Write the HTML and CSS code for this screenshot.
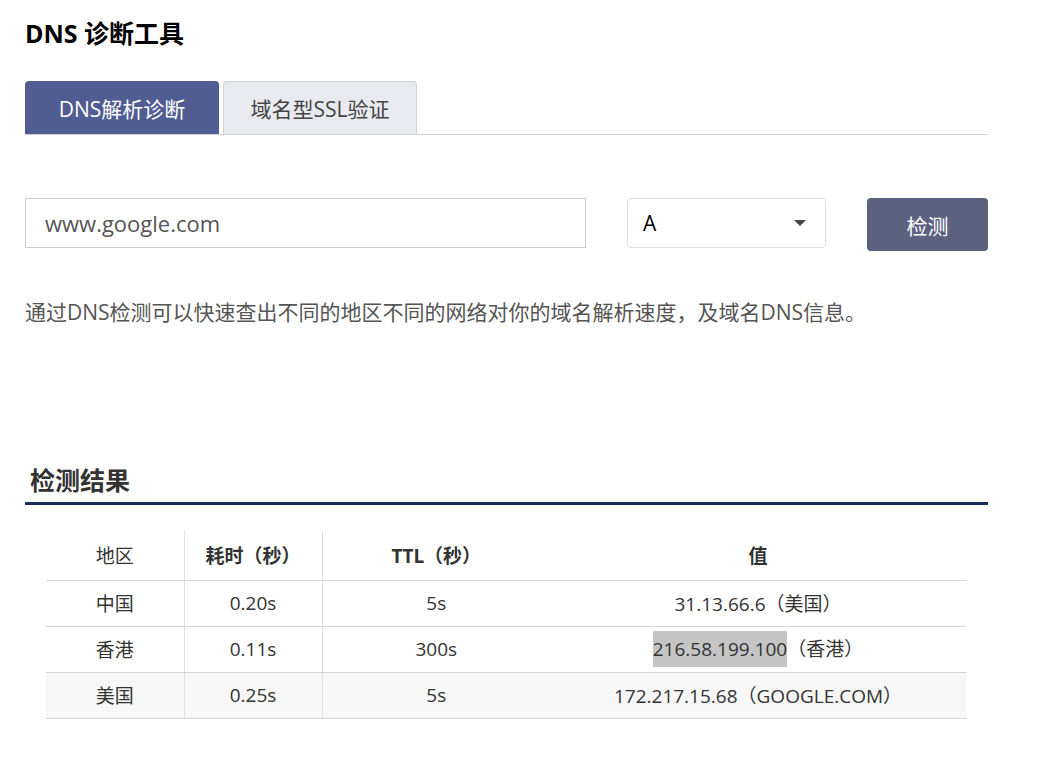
FILE: index.html
```html
<!DOCTYPE html>
<html lang="zh-CN">
<head>
<meta charset="utf-8">
<title>DNS 诊断工具</title>
<link rel="stylesheet" href="styles.css">
</head>
<body>
<div class="page">
  <h1 class="title">DNS 诊断工具</h1>
  <div class="tabs">
    <div class="tab tab-active">DNS解析诊断</div>
    <div class="tab">域名型SSL验证</div>
  </div>
  <div class="form-row">
    <div class="input">www.google.com</div>
    <div class="select">
      <span>A</span>
      <svg class="caret" width="12" height="6" viewBox="0 0 12 6"><path d="M0 0H12L6 6Z" fill="#444"/></svg>
    </div>
    <div class="btn">检测</div>
  </div>
  <p class="desc">通过DNS检测可以快速查出不同的地区不同的网络对你的域名解析速度，及域名DNS信息。</p>
  <h2 class="section-title">检测结果</h2>
  <table class="result">
    <colgroup>
      <col class="c1"><col class="c2"><col class="c3"><col class="c4">
    </colgroup>
    <thead>
      <tr>
        <th class="normal sep">地区</th>
        <th class="sep">耗时（秒）</th>
        <th>TTL（秒）</th>
        <th>值</th>
      </tr>
    </thead>
    <tbody>
      <tr>
        <td class="sep">中国</td>
        <td class="sep">0.20s</td>
        <td>5s</td>
        <td>31.13.66.6（美国）</td>
      </tr>
      <tr>
        <td class="sep">香港</td>
        <td class="sep">0.11s</td>
        <td>300s</td>
        <td><span class="hl">216.58.199.100</span>（香港）</td>
      </tr>
      <tr class="shaded">
        <td class="sep">美国</td>
        <td class="sep">0.25s</td>
        <td>5s</td>
        <td>172.217.15.68（GOOGLE.COM）</td>
      </tr>
    </tbody>
  </table>
</div>
</body>
</html>
```

FILE: styles.css
```css
* { box-sizing: border-box; }
html, body { margin: 0; padding: 0; background: #fff; }
body {
  font-family: "Open Sans", "Noto Sans CJK SC", sans-serif;
  color: #333;
}
.page {
  margin-left: 25px;
  width: 963px;
}
.title {
  margin: 16px 0 0;
  font-size: 25px;
  line-height: 34px;
  font-weight: 700;
  color: #000;
}
.tabs {
  margin-top: 31px;
  display: flex;
  gap: 4px;
  border-bottom: 1px solid #cfd1dc;
}
.tab {
  width: 194px;
  height: 53px;
  display: flex;
  align-items: center;
  justify-content: center;
  font-size: 21px;
  color: #444;
  background: #e9eaf0;
  border: 1px solid #cfd1dc;
  border-bottom: none;
  border-radius: 4px 4px 0 0;
}
.tab-active {
  background: #4f5d92;
  border-color: #4f5d92;
  color: #fff;
}
.form-row {
  margin-top: 63px;
  display: flex;
  align-items: flex-start;
}
.input {
  width: 561px;
  height: 50px;
  border: 1px solid #ccc;
  padding-left: 19px;
  display: flex;
  align-items: center;
  font-size: 22px;
  color: #555;
}
.select {
  margin-left: 41px;
  width: 199px;
  height: 50px;
  border: 1px solid #ddd;
  border-radius: 4px;
  padding: 0 19px 0 15px;
  display: flex;
  align-items: center;
  justify-content: space-between;
  font-size: 21px;
  color: #000;
}
.caret { display: block; }
.btn {
  margin-left: 41px;
  width: 121px;
  height: 53px;
  border-radius: 4px;
  background: #5c6180;
  color: #fff;
  font-size: 21px;
  display: flex;
  align-items: center;
  justify-content: center;
}
.desc {
  margin: 46px 0 0;
  font-size: 21px;
  line-height: 30px;
  color: #555;
}
.section-title {
  margin: 136px 0 0;
  padding: 0 0 5px 5px;
  font-size: 25px;
  line-height: 34px;
  font-weight: 700;
  color: #333;
  border-bottom: 3px solid #1b2d5e;
}
.result {
  margin: 25px 0 0 21px;
  width: 920px;
  border-collapse: collapse;
  table-layout: fixed;
  font-size: 19px;
  color: #333;
}
.c1, .c2 { width: 138px; }
.c3 { width: 228px; }
.c4 { width: 416px; }
.result th {
  height: 50px;
  font-weight: 700;
  text-align: center;
  padding: 0;
  border-bottom: 1px solid #d6d6d6;
}
.result th.normal { font-weight: 400; }
.result td {
  height: 46px;
  text-align: center;
  padding: 0;
  border-bottom: 1px solid #d6d6d6;
}
.result .sep { border-right: 1px solid #e0e0e0; }
.shaded td { background: #f7f7f7; }
.hl {
  display: inline-block;
  background: #c5c5c5;
  line-height: 36px;
}
```
